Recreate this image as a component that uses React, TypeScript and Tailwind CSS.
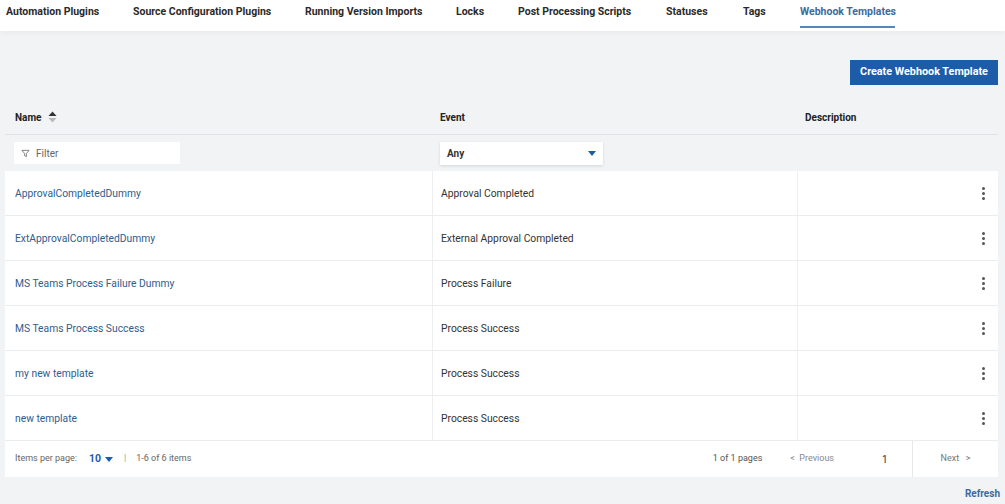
const tabs = [
  { label: "Automation Plugins", w: "w-[127px]" },
  { label: "Source Configuration Plugins", w: "w-[172px]" },
  { label: "Running Version Imports", w: "w-[151px]" },
  { label: "Locks", w: "w-[62px]" },
  { label: "Post Processing Scripts", w: "w-[148px]" },
  { label: "Statuses", w: "w-[77px]" },
  { label: "Tags", w: "w-[57px]" },
];

const rows = [
  { name: "ApprovalCompletedDummy", event: "Approval Completed" },
  { name: "ExtApprovalCompletedDummy", event: "External Approval Completed" },
  { name: "MS Teams Process Failure Dummy", event: "Process Failure" },
  { name: "MS Teams Process Success", event: "Process Success" },
  { name: "my new template", event: "Process Success" },
  { name: "new template", event: "Process Success" },
];

function Kebab() {
  return (
    <div className="flex flex-col items-center gap-[2px]">
      <span className="block h-[3px] w-[3px] rounded-full bg-[#555]" />
      <span className="block h-[3px] w-[3px] rounded-full bg-[#555]" />
      <span className="block h-[3px] w-[3px] rounded-full bg-[#555]" />
    </div>
  );
}

function SortIcon() {
  return (
    <svg width="9" height="12" viewBox="0 0 9 12" className="ml-[7px]">
      <path d="M4.5 0.5 L8.5 5 L0.5 5 Z" fill="#333" />
      <path d="M4.5 11.5 L8.5 7 L0.5 7 Z" fill="#b5b9bd" />
    </svg>
  );
}

function FunnelIcon() {
  return (
    <svg width="9" height="9" viewBox="0 0 10 10" className="mr-[6px]">
      <path d="M1 1.5 H9 L6 5 V8.5 L4 7.5 V5 Z" fill="none" stroke="#777" strokeWidth="1" />
    </svg>
  );
}

function Caret({ color = "#1d5ca8" }: { color?: string }) {
  return (
    <svg width="8" height="5" viewBox="0 0 8 5">
      <path d="M0 0 H8 L4 5 Z" fill={color} />
    </svg>
  );
}

export default function App() {
  return (
    <div className="h-[504px] w-[1005px] overflow-hidden bg-[#f1f3f4] font-['Roboto','Liberation_Sans',sans-serif] text-[#222]">
      {/* tabs */}
      <div className="flex h-[31px] items-start bg-white pl-[6px] shadow-[0_2px_6px_rgba(0,0,0,0.04)]">
        {tabs.map((t) => (
          <div key={t.label} className={`${t.w} shrink-0 pt-[4px] text-[10.5px] font-bold text-[#2a2a2a]`}>
            {t.label}
          </div>
        ))}
        <div className="shrink-0 pt-[4px] text-[10.5px] font-bold text-[#3d6a9e]">
          <div>Webhook Templates</div>
          <div className="mt-[6px] h-[2px] w-[95px] bg-[#5a86b5]" />
        </div>
      </div>

      {/* action */}
      <div className="flex justify-end pr-[7px] pt-[29px]">
        <button className="h-[25px] w-[148px] bg-[#1d5ca8] text-[10.8px] font-bold text-white">
          Create Webhook Template
        </button>
      </div>

      {/* table */}
      <div className="mx-[5px] mt-[15px] w-[993px]">
        <div className="flex h-[35px] items-center border-b border-[#e0e3e5] text-[10px] font-bold">
          <div className="flex w-[427px] items-center pl-[10px]">
            Name
            <SortIcon />
          </div>
          <div className="w-[365px] pl-[8px]">Event</div>
          <div className="flex-1 pl-[8px]">Description</div>
        </div>
        <div className="flex h-[36px] items-center">
          <div className="w-[427px] pl-[9px]">
            <div className="flex h-[22px] w-[166px] items-center bg-white pl-[7px] text-[10px] text-[#666]">
              <FunnelIcon />
              Filter
            </div>
          </div>
          <div className="w-[365px] pl-[8px]">
            <div className="flex h-[23px] w-[163px] items-center justify-between bg-white pl-[7px] pr-[7px] text-[10px] font-bold text-[#333] shadow-[0_1px_3px_rgba(0,0,0,0.12)]">
              Any
              <Caret color="#1d5ca8" />
            </div>
          </div>
        </div>

        <div className="bg-white">
          {rows.map((r) => (
            <div key={r.name} className="flex h-[45px] items-center border-b border-[#eaecee] text-[10.3px]">
              <div className="flex h-full w-[427px] items-center pl-[10px] pt-[1px] text-[#2e5d8e]">{r.name}</div>
              <div className="flex h-full w-[365px] items-center border-l border-[#eceef0] pl-[8px] pt-[1px] text-[#333]">
                {r.event}
              </div>
              <div className="h-full flex-1 border-l border-[#eceef0]" />
              <div className="flex h-full w-[30px] items-center justify-center">
                <Kebab />
              </div>
            </div>
          ))}
          <div className="flex h-[36px] items-center text-[9px] text-[#666]">
            <div className="flex flex-1 items-center pl-[10px]">
              <span>Items per page:</span>
              <span className="ml-[12px] flex items-center gap-[4px] text-[10.5px] font-bold text-[#1d5ca8]">
                10
                <Caret />
              </span>
              <span className="ml-[11px] text-[#999]">|</span>
              <span className="ml-[10px]">1-6 of 6 items</span>
            </div>
            <span className="text-[#555]">1 of 1 pages</span>
            <span className="ml-[28px] text-[#888]">&lt;&nbsp;&nbsp;Previous</span>
            <span className="ml-[48px] w-[30px] text-[10px] text-[#333]">1</span>
            <div className="flex h-full w-[86px] items-center justify-center border-l border-[#e6e8ea] text-[#777]">
              Next&nbsp;&nbsp;&nbsp;&gt;
            </div>
          </div>
        </div>
      </div>

      <div className="flex justify-end pr-[5px] pt-[9px] text-[10px] font-bold text-[#3d6a9e]">Refresh</div>
    </div>
  );
}
